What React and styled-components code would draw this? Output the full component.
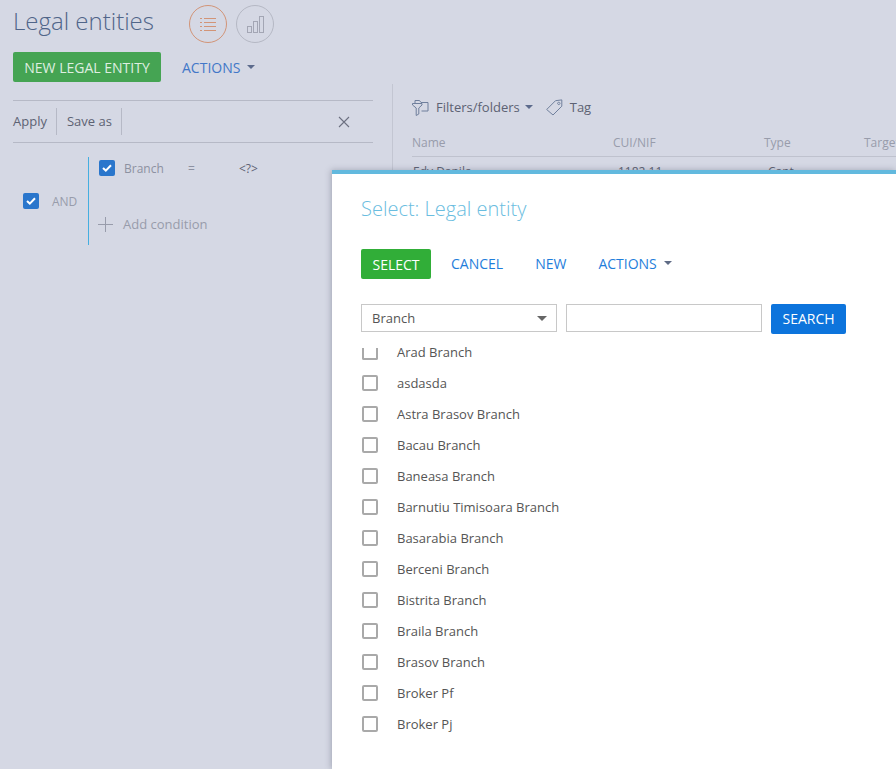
import React from "react";
import styled, { createGlobalStyle } from "styled-components";

const Global = createGlobalStyle`
html, body {
  margin: 0;
  padding: 0;
}
body {
  font-family: "Open Sans", "Liberation Sans", sans-serif;
  background: #d5d8e4;
}
`;

const Page = styled.div`
position: relative;
width: 896px;
height: 769px;
overflow: hidden;
background: #d5d8e4;
`;

const Header = styled.div`
display: flex;
align-items: center;
height: 48px;
padding: 0 0 0 13px;
`;

const Title = styled.h1`
margin: 0 34px 6px 0;
width: 142px;
font-size: 24px;
font-weight: 300;
line-height: 38px;
color: #506589;
white-space: nowrap;
`;

const ViewButton = styled.div`
display: flex;
align-items: center;
justify-content: center;
box-sizing: border-box;
width: 38px;
height: 38px;
margin-right: 9px;
border-radius: 50%;
border: 1px solid ${(p) => (p.$active ? "#d29477" : "#b5b8c4")};
`;

const Toolbar = styled.div`
display: flex;
align-items: center;
height: 30px;
margin-top: 4px;
padding-left: 13px;
`;

const GreenButton = styled.div`
display: flex;
align-items: center;
justify-content: center;
height: 30px;
padding-bottom: ${(p) => p.$lift || 0}px;
box-sizing: border-box;
width: ${(p) => p.$w}px;
background: ${(p) => p.$bg};
border-radius: 2px;
color: ${(p) => p.$fg};
font-size: 14px;
`;

const LinkButton = styled.div`
display: flex;
align-items: center;
gap: 7px;
margin-left: ${(p) => p.$ml}px;
padding-bottom: ${(p) => p.$lift || 0}px;
font-size: 14px;
color: ${(p) => p.$color};
`;

const Caret = styled.span`
display: block;
width: 0;
height: 0;
border-left: ${(p) => p.$size || 4}px solid transparent;
border-right: ${(p) => p.$size || 4}px solid transparent;
border-top: ${(p) => p.$size || 4}px solid ${(p) => p.$color};
`;

const Content = styled.div`
display: flex;
margin-top: 2px;
height: 660px;
`;

const FilterPanel = styled.div`
box-sizing: border-box;
flex: none;
width: 393px;
padding: 16px 19px 0 13px;
border-right: 1px solid #c3c6d2;
`;

const FilterBar = styled.div`
display: flex;
align-items: center;
height: 41px;
border-top: 1px solid #b6b9c6;
border-bottom: 1px solid #b6b9c6;
font-size: 13px;
color: #5d6273;
`;

const FilterItem = styled.div`
display: flex;
align-items: center;
box-sizing: border-box;
height: 27px;
padding: 0 9px 2px ${(p) => p.$pl}px;
border-right: 1px solid #b6b9c6;
`;

const CloseIcon = styled.svg`
margin-left: auto;
margin-right: 23px;
`;

const Group = styled.div`
display: flex;
margin-top: 14px;
`;

const GroupLabel = styled.div`
display: flex;
align-items: center;
width: 75px;
padding-left: 10px;
box-sizing: border-box;
gap: 13px;
font-size: 12px;
color: #989cab;
`;

const Check = styled.span`
display: flex;
align-items: center;
justify-content: center;
width: 16px;
height: 16px;
border-radius: 2px;
background: #2a76cc;
flex: none;
`;

const Conditions = styled.div`
width: 270px;
height: 88px;
border-left: 1px solid #45aee0;
padding-left: 10px;
`;

const ConditionRow = styled.div`
display: flex;
align-items: center;
height: 22px;
font-size: 12px;
color: #8d91a1;
`;

const CondBranch = styled.span`
margin-left: 9px;
width: 64px;
`;

const CondOp = styled.span`
width: 51px;
`;

const CondValue = styled.span`
color: #5d6273;
`;

const AddRow = styled.div`
display: flex;
align-items: center;
gap: 10px;
margin-top: 36px;
margin-left: -1px;
font-size: 13px;
color: #989cab;
`;

const GridPanel = styled.div`
flex: 1;
min-width: 0;
padding: 11px 0 0 19px;
`;

const GridTools = styled.div`
display: flex;
align-items: center;
height: 24px;
font-size: 13px;
color: #5d6273;
`;

const FilterLabel = styled.span`
margin-left: 7px;
margin-right: 5px;
`;

const TagIcon = styled.svg`
margin-left: 13px;
margin-right: 7px;
`;

const GridHead = styled.div`
display: grid;
grid-template-columns: 201px 151px 100px 100px;
align-items: center;
margin-top: 11px;
height: 25px;
padding-bottom: 1px;
width: 552px;
border-bottom: 1px solid #bfc2ce;
font-size: 12px;
color: #989cab;
white-space: nowrap;
`;

const GridRow = styled(GridHead)`
margin-top: 2px;
border: none;
color: #5d6273;
`;

const RowCell = styled.span`
padding-left: ${(p) => p.$pl}px;
`;

const Modal = styled.div`
position: absolute;
left: 332px;
top: 170px;
width: 564px;
height: 599px;
box-sizing: border-box;
background: #fff;
border-top: 4px solid #62b9de;
box-shadow: -1px 0 6px rgba(70, 75, 95, 0.35);
padding: 21px 0 0 29px;
`;

const ModalTitle = styled.h2`
margin: 0;
font-size: 20px;
font-weight: 300;
line-height: 28px;
color: #6abde0;
`;

const ModalActions = styled.div`
display: flex;
align-items: center;
margin-top: 26px;
height: 30px;
`;

const SearchRow = styled.div`
display: flex;
align-items: flex-start;
gap: 9px;
margin-top: 25px;
`;

const SelectBox = styled.div`
display: flex;
align-items: center;
justify-content: space-between;
box-sizing: border-box;
width: 196px;
height: 28px;
padding: 0 9px 0 10px;
border: 1px solid #c8c8c8;
font-size: 13px;
color: #555;
`;

const TextBox = styled.div`
box-sizing: border-box;
width: 196px;
height: 28px;
border: 1px solid #c8c8c8;
`;

const List = styled.div`
margin-top: 2px;
`;

const ListRow = styled.div`
display: flex;
align-items: center;
height: 31px;
padding-left: 1px;
gap: 19px;
font-size: 13px;
color: #555;
`;

const Box = styled.span`
box-sizing: border-box;
width: 16px;
height: ${(p) => (p.$cut ? 12 : 16)}px;
margin-top: ${(p) => (p.$cut ? 4 : 0)}px;
border: 2px solid #a9a9a9;
border-top-width: ${(p) => (p.$cut ? 0 : 2)}px;
border-radius: ${(p) => (p.$cut ? "0 0 2px 2px" : "2px")};
`;

const branches = [
  "Arad Branch",
  "asdasda",
  "Astra Brasov Branch",
  "Bacau Branch",
  "Baneasa Branch",
  "Barnutiu Timisoara Branch",
  "Basarabia Branch",
  "Berceni Branch",
  "Bistrita Branch",
  "Braila Branch",
  "Brasov Branch",
  "Broker Pf",
  "Broker Pj",
];

const CheckMark = () => (
  <svg width="10" height="8" viewBox="0 0 10 8" fill="none">
    <path d="M1 4l2.800 2.600L9 1.200" stroke="#fff" strokeWidth="2" />
  </svg>
);

const ListIcon = () => (
  <svg width="16" height="13" viewBox="0 0 16 13" fill="none" stroke="#d29477">
    <path d="M0 .5h2M4 .5h12M0 4.500h2M4 4.500h12M0 8.500h2M4 8.500h12M0 12.500h2M4 12.500h12" />
  </svg>
);

const ChartIcon = () => (
  <svg width="17" height="17" viewBox="0 0 17 17" fill="none" stroke="#a3a6b4">
    <rect x="0.500" y="10.500" width="4" height="6" />
    <rect x="6.500" y="5.500" width="4" height="11" />
    <rect x="12.500" y="0.500" width="4" height="16" />
  </svg>
);

const App = () => {
  return (
    <Page>
      <Global />
      <Header>
        <Title>Legal entities</Title>
        <ViewButton $active>
          <ListIcon />
        </ViewButton>
        <ViewButton>
          <ChartIcon />
        </ViewButton>
      </Header>
      <Toolbar>
        <GreenButton $w={148} $bg="#45a453" $fg="#dfeee0">NEW LEGAL ENTITY</GreenButton>
        <LinkButton $ml={21} $color="#4277c8">
          ACTIONS <Caret $color="#5d6b8c" />
        </LinkButton>
      </Toolbar>
      <Content>
        <FilterPanel>
          <FilterBar>
            <FilterItem $pl={0}>Apply</FilterItem>
            <FilterItem $pl={10}>Save as</FilterItem>
            <CloseIcon width="12" height="12" viewBox="0 0 12 12" fill="none" stroke="#6c7080" strokeWidth="1.1">
              <path d="M1 1l10 10M11 1L1 11" />
            </CloseIcon>
          </FilterBar>
          <Group>
            <GroupLabel>
              <Check><CheckMark /></Check>
              AND
            </GroupLabel>
            <Conditions>
              <ConditionRow>
                <Check><CheckMark /></Check>
                <CondBranch>Branch</CondBranch>
                <CondOp>=</CondOp>
                <CondValue>&lt;?&gt;</CondValue>
              </ConditionRow>
              <AddRow>
                <svg width="15" height="15" viewBox="0 0 15 15" fill="none" stroke="#989cab">
                  <path d="M7.500 0v15M0 7.500h15" />
                </svg>
                Add condition
              </AddRow>
            </Conditions>
          </Group>
        </FilterPanel>
        <GridPanel>
          <GridTools>
            <svg width="17" height="17" viewBox="0 0 17 17" fill="none" stroke="#6f7f9c">
              <path d="M3 4.500V1.500h4.500l1.500 2h7v8.500H9.500M.5 4.500h9.500v1.500L6.800 9v6L4.200 16.500V9L.5 6z" />
            </svg>
            <FilterLabel>Filters/folders</FilterLabel>
            <Caret $color="#5d6b8c" />
            <TagIcon width="17" height="17" viewBox="0 0 17 17" fill="none" stroke="#6f7f9c">
              <path d="M.7 10.500L9.500 1.700l6.300-.8v6.300L7 16zM12.800 3.200a1.200 1.200 0 1 0 .01 0" />
            </TagIcon>
            Tag
          </GridTools>
          <GridHead>
            <span>Name</span>
            <span>CUI/NIF</span>
            <span>Type</span>
            <span>Target</span>
          </GridHead>
          <GridRow>
            <RowCell $pl={1}>Edy Danila</RowCell>
            <RowCell $pl={5}>1182 11</RowCell>
            <RowCell $pl={4}>Capt</RowCell>
          </GridRow>
        </GridPanel>
      </Content>
      <Modal>
        <ModalTitle>Select: Legal entity</ModalTitle>
        <ModalActions>
          <GreenButton $w={70} $bg="#31ae38" $fg="#fff">SELECT</GreenButton>
          <LinkButton $ml={20} $lift={2} $color="#1f7edb">CANCEL</LinkButton>
          <LinkButton $ml={32} $lift={2} $color="#1f7edb">NEW</LinkButton>
          <LinkButton $ml={32} $lift={2} $color="#1f7edb">
            ACTIONS <Caret $color="#5f6b85" />
          </LinkButton>
        </ModalActions>
        <SearchRow>
          <SelectBox>
            Branch
            <Caret $size={5} $color="#666" />
          </SelectBox>
          <TextBox />
          <GreenButton $w={75} $lift={2} $bg="#0d74dc" $fg="#fff">SEARCH</GreenButton>
        </SearchRow>
        <List>
          {branches.map((name, i) => (
            <ListRow key={name}>
              <Box $cut={i === 0} />
              {name}
            </ListRow>
          ))}
        </List>
      </Modal>
    </Page>
  );
};

export default App;
